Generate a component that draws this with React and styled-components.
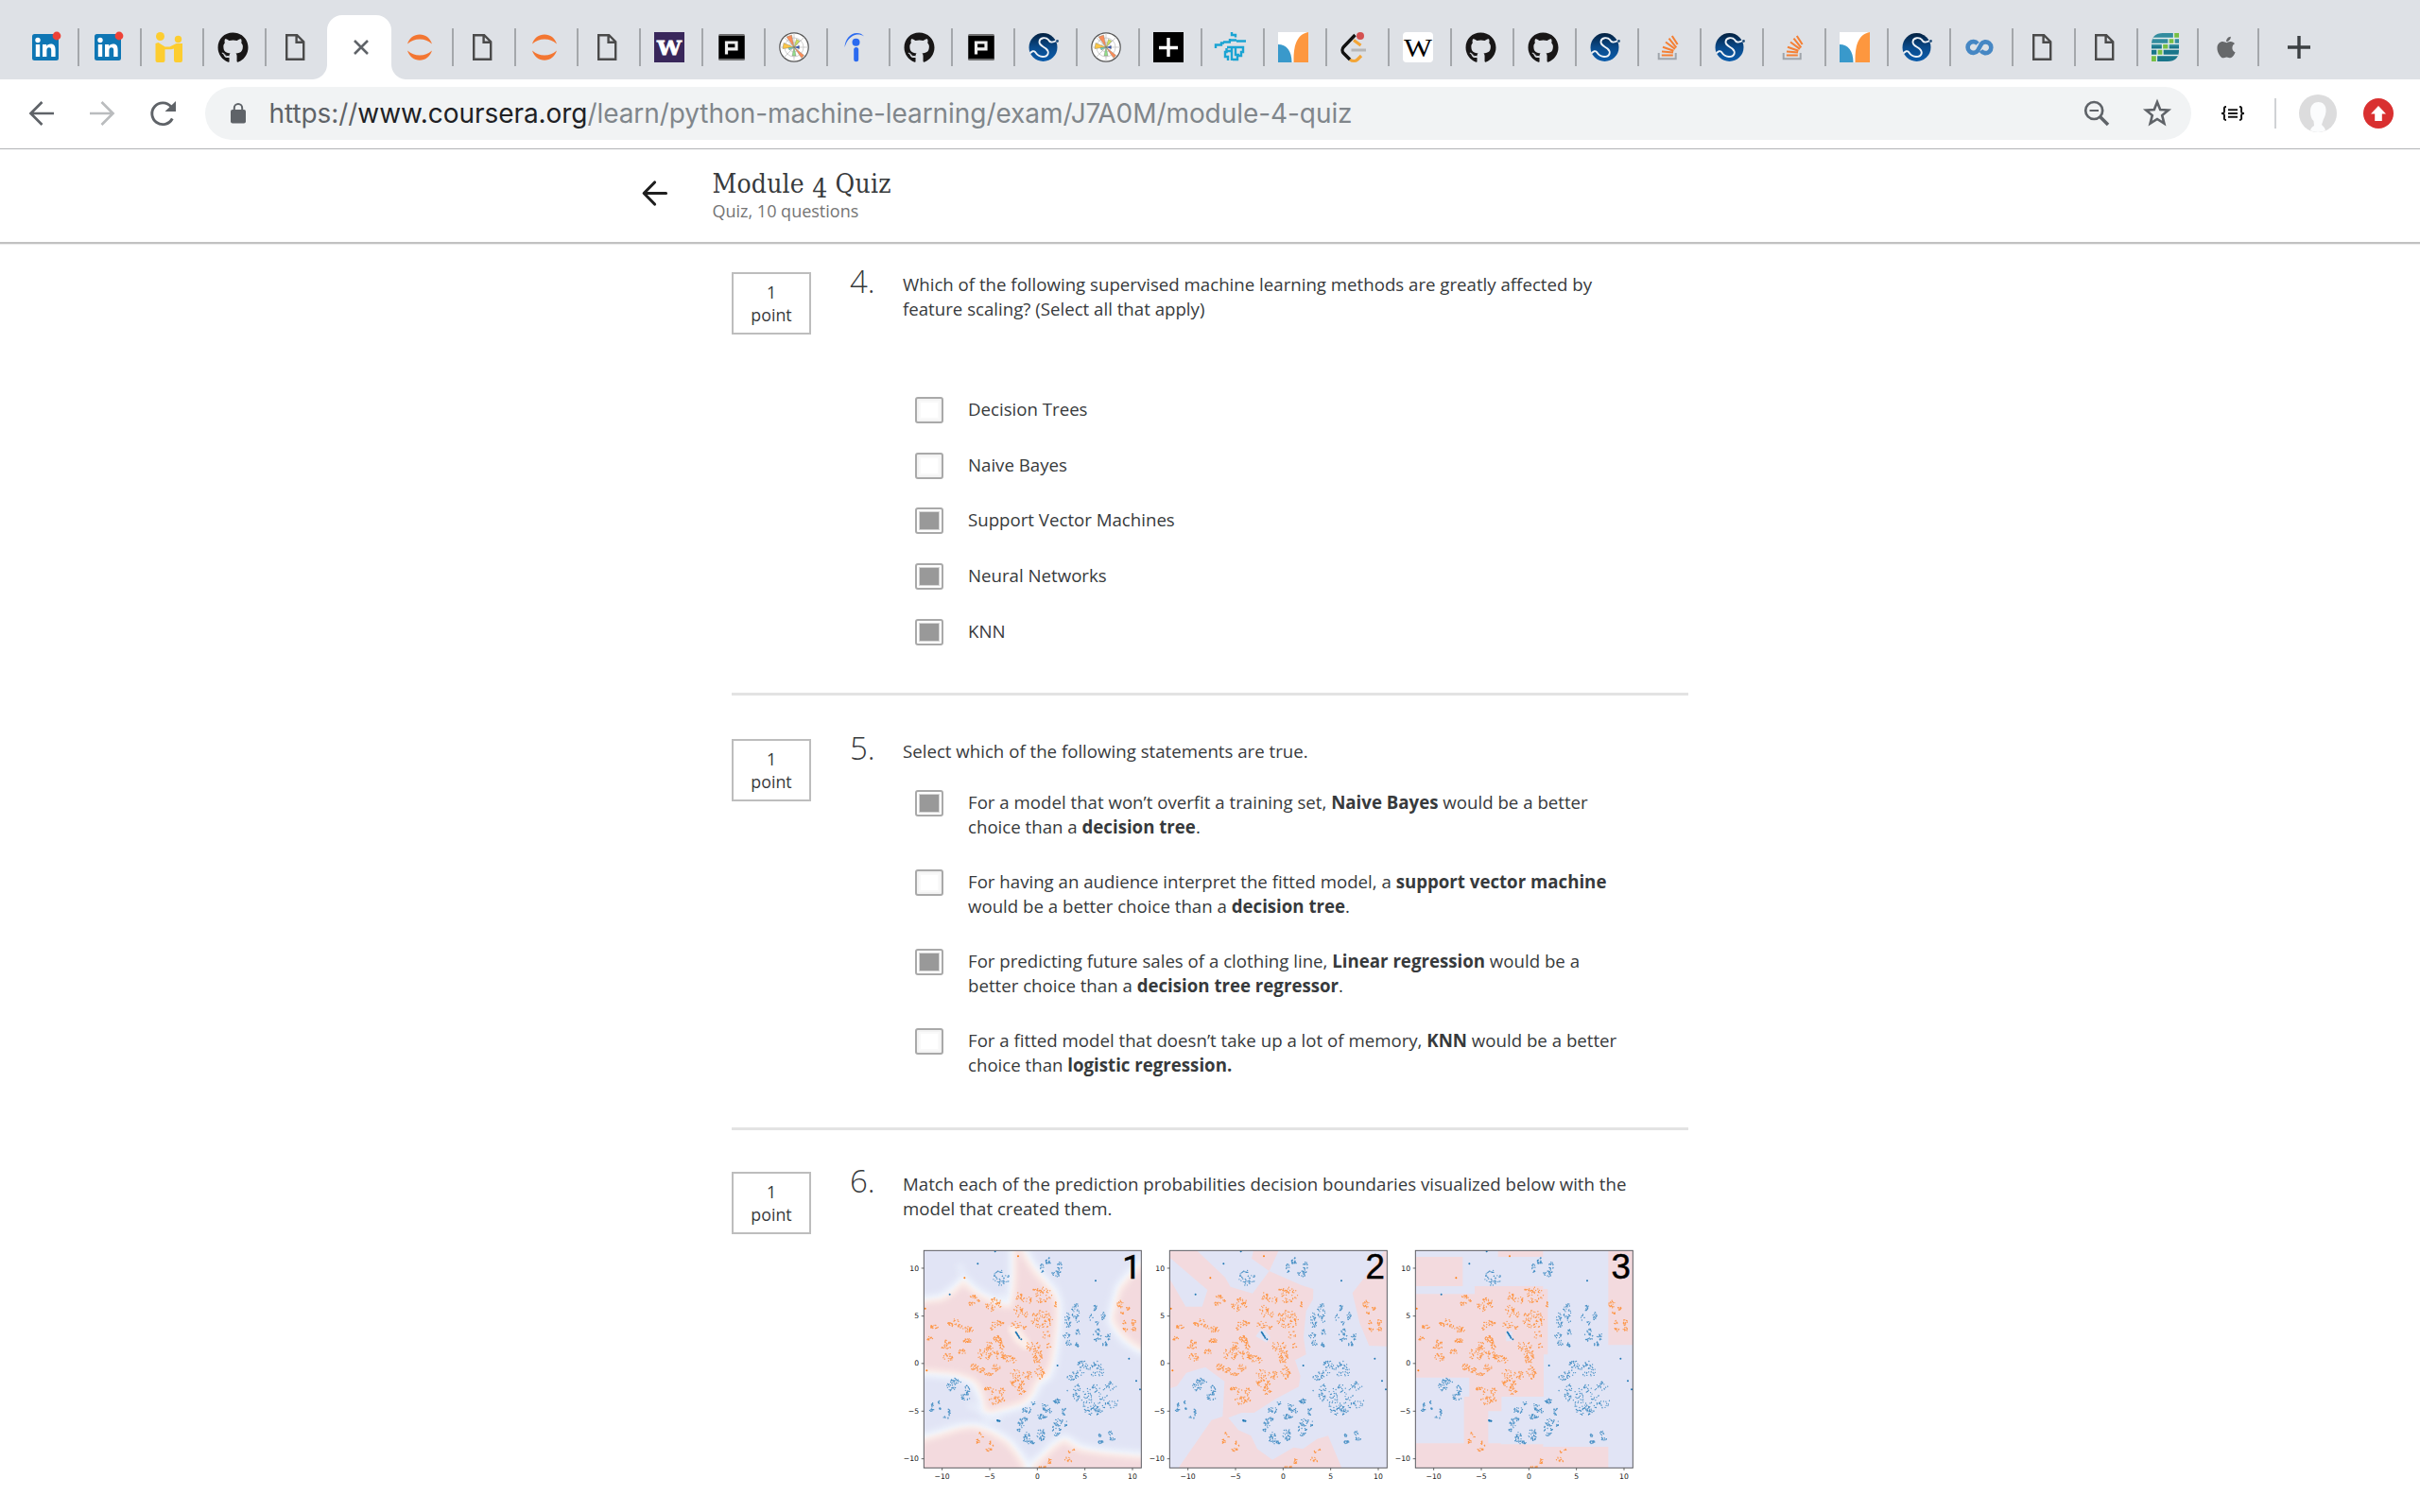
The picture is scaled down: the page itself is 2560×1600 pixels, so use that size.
import React from "react";
import styled, { createGlobalStyle } from "styled-components";
import { FaGithub, FaApple } from "react-icons/fa";

const GlobalStyle = createGlobalStyle`
  html, body { margin: 0; padding: 0; background: #fff; }
  *, *::before, *::after { box-sizing: border-box; }
  body { font-family: "Open Sans", "Noto Sans", sans-serif; color: #373a3c; }
`;

const Page = styled.div`
  width: 2560px;
  height: 1600px;
  overflow: hidden;
  background: #fff;
  svg { display: block; flex: none; overflow: visible; }
`;

/* ---------- browser chrome ---------- */

const TabStrip = styled.div`
  display: flex;
  height: 84px;
  padding: 16px 0 0 18px;
  background: #dee1e6;
`;

const Tab = styled.div`
  display: flex;
  align-items: center;
  justify-content: space-between;
  width: ${(p) => (p.$narrow ? 64 : 66)}px;
  height: 68px;
  padding-left: ${(p) => (p.$narrow ? 13 : 14)}px;
  &::after {
    content: "";
    width: 2px;
    height: 40px;
    background: ${(p) => (p.$noLine ? "transparent" : "#a4a7ab")};
  }
`;

const ActiveTab = styled.div`
  position: relative;
  display: flex;
  align-items: center;
  justify-content: center;
  width: 68px;
  margin: 0 0 0 -2px;
  padding-left: 3px;
  height: 68px;
  background: #fff;
  border-radius: 16px 16px 0 0;
  &::before, &::after {
    content: "";
    position: absolute;
    bottom: 0;
    width: 16px;
    height: 16px;
  }
  &::before { left: -16px; background: radial-gradient(circle at 0 0, transparent 15.5px, #fff 16.5px); }
  &::after { right: -16px; background: radial-gradient(circle at 100% 0, transparent 15.5px, #fff 16.5px); }
`;

const NewTab = styled.div`
  display: flex;
  align-items: center;
  padding-left: 30px;
`;

const Toolbar = styled.div`
  display: flex;
  align-items: center;
  height: 74px;
  padding: 0 28px 2px 28px;
  border-bottom: 1px solid #b2b4b6;
`;

const NavButtons = styled.div`
  display: flex;
  gap: 32px;
  width: 189px;
`;

const Omnibox = styled.div`
  display: flex;
  align-items: center;
  width: 2101px;
  height: 56px;
  padding: 0 20px 0 27px;
  border-radius: 28px;
  background: #f1f3f4;
`;

const Url = styled.div`
  flex: 1;
  margin-left: 24.5px;
  font: 400 28px/56px Inter, Roboto, sans-serif;
  letter-spacing: ${-0.065}px;
  color: #80868b;
  white-space: nowrap;
`;
const Scheme = styled.span`color: #5f6368;`;
const Host = styled.span`color: #202124;`;

const OmniActions = styled.div`
  display: flex;
  gap: 32px;
`;

const Extensions = styled.div`
  display: flex;
  align-items: center;
  padding-left: 30px;
`;
const Braces = styled.div`
  width: 28px;
  display: flex;
  justify-content: center;
`;
const Rule = styled.div`
  width: 2px;
  height: 32px;
  margin: 0 24px 0 30px;
  background: #d0d2d5;
`;
const Badges = styled.div`
  display: flex;
  align-items: center;
  gap: 28px;
`;

/* ---------- quiz page ---------- */

const QuizHeader = styled.header`
  display: flex;
  height: 100px;
  padding: 0 0 0 678.5px;
  border-bottom: 2px solid #c1c1c1;
  box-shadow: 0 1px 1px #ececec;
`;
const BackArrow = styled.div`
  width: 75px;
  padding-top: 33px;
`;
const Titles = styled.div`padding-top: 19px;`;
const Title = styled.h1`
  margin: 0;
  font: 400 28px/36px "DejaVu Serif Condensed", "DejaVu Serif", serif;
  font-stretch: condensed;
  letter-spacing: ${0.2}px;
  white-space: nowrap;
`;
const OldStyle = styled.span`
  display: inline-block;
  transform: translateY(5px);
`;
const Subtitle = styled.div`
  margin-top: -2px;
  font-size: 18px;
  line-height: 24px;
  color: #757575;
`;

const Content = styled.main`
  width: 1012px;
  margin-left: 774px;
`;

const Question = styled.section`
  display: grid;
  grid-template-columns: 84px 97px 1fr;
  align-items: start;
  height: ${(p) => p.$height}px;
  padding-top: ${(p) => p.$top}px;
  border-bottom: 3px solid #e3e3e3;
`;
const Points = styled.div`
  height: 66px;
  padding-top: 7px;
  border: 2px solid #bdbdbd;
  font-size: 17.8px;
  line-height: 24px;
  text-align: center;
`;
const Number = styled.div`
  margin-top: -12px;
  padding-left: 41px;
  font-size: 33px;
  font-weight: 300;
  line-height: 44px;
`;
const Body = styled.div`
  font-size: 18.67px;
  line-height: 26px;
  white-space: nowrap;
`;
const Options = styled.div`
  display: flex;
  flex-direction: column;
  gap: ${(p) => p.$gap}px;
  margin-top: ${(p) => p.$top}px;
  padding-left: 13px;
`;
const Option = styled.label`
  display: flex;
  align-items: flex-start;
  gap: 26px;
`;
const Check = styled.span`
  flex: none;
  width: 30px;
  height: 28px;
  margin-bottom: -2px;
  padding: 2px;
  border: 2px solid #a9a9a9;
  border-radius: 3px;
  background: ${(p) => (p.$on ? "#fff" : "#f3f3f3")};
  &::before {
    content: "";
    display: block;
    height: 100%;
    border: ${(p) => (p.$on ? "1px solid #d5d5d5" : "2px solid #f9f9f9")};
    background: ${(p) => (p.$on ? "#999" : "#fff")};
  }
`;
const Charts = styled.div`
  display: flex;
  gap: 5.2px;
  margin-top: 28px;
`;

/* ---------- favicons ---------- */

const Fav = ({ children, box = 32, size = 32 }) => (
  <svg width={size} height={size} viewBox={`0 0 ${box} ${box}`}>{children}</svg>
);

const LinkedIn = () => (
  <Fav>
    <rect x="2" y="2" width="28" height="28" rx="2.5" fill="#0e76b4" />
    <circle cx="8" cy="8.5" r="2.7" fill="#fff" />
    <path d="M5.8 13h4.4v13H5.8zM13 13h4.2v1.9c.8-1.4 2.3-2.3 4.4-2.3 4 0 5 2.6 5 6.2V26h-4.4v-6.5c0-1.800-.2-3.300-2.300-3.300-2 0-2.500 1.500-2.500 3.300V26H13z" fill="#fff" />
    <circle cx="28" cy="4" r="4.4" fill="#ee4237" />
  </Fav>
);
const People = () => (
  <Fav>
    <g fill="#fdcd30">
      <circle cx="5.500" cy="4.500" r="4.500" />
      <circle cx="24.500" cy="7.500" r="3.700" />
      <path d="M.5 12l3-1 7 4.500h5l7-3.500H29V30a2 2 0 0 1-2 2h-5a2 2 0 0 1-2-2V17.500l-3 .8h-6.500V30a2 2 0 0 1-2 2H2.500a2 2 0 0 1-2-2z" />
    </g>
  </Fav>
);
const GitHub = () => <FaGithub size={33} color="#181616" />;
const Doc = () => (
  <Fav>
    <path d="M7.200 3.200h11l7 7v18.600h-18zM17.600 3.500v7.300h7.300" fill="none" stroke="#4a4a4a" strokeWidth="2.400" />
  </Fav>
);
const Jupyter = () => (
  <Fav>
    <path d="M3 12.500C5 6 10 2.400 16 2.400S27 6 29 12.500C25 9 21 7.600 16 7.600S7 9 3 12.500zM3 19.500C5 26 10 29.800 16 29.800S27 26 29 19.500C25 23 21 24.400 16 24.400S7 23 3 19.500z" fill="#f37632" />
  </Fav>
);
const UW = () => (
  <Fav>
    <rect width="32" height="32" fill="#39275b" />
    <text x="16" y="23.500" textAnchor="middle" fontFamily="DejaVu Serif" fontWeight="700" fontSize="21" textLength="26" lengthAdjust="spacingAndGlyphs" fill="#fff" stroke="#fff" strokeWidth=".8">W</text>
  </Fav>
);
const PBox = () => (
  <Fav>
    <rect x="2" y="2" width="28" height="28" rx="1.500" fill="#6d6d6e" />
    <rect x="2.500" y="4" width="27" height="24" fill="#000" />
    <path d="M10.500 23.500V11h10.500v6.800H11.500" fill="none" stroke="#eee" strokeWidth="3.200" />
  </Fav>
);
const Matplotlib = () => (
  <Fav>
    <circle cx="16" cy="16" r="15.200" fill="#fff" stroke="#555" strokeWidth="1.200" />
    <g stroke="#bbb" strokeWidth=".7" fill="none">
      <circle cx="16" cy="16" r="10" /><circle cx="16" cy="16" r="5" />
      <path d="M16 1v30M1 16h30M5.500 5.500l21 21M26.500 5.500l-21 21" />
    </g>
    <g stroke="#776" strokeWidth=".4">
      <path d="M16 16L8 5l5.500-2z" fill="#fb8d59" />
      <path d="M16 16L4 17.500 5 11.500z" fill="#fcc646" />
      <path d="M16 16l2.500-8.500 3.500 2z" fill="#cde35c" />
      <path d="M16 16l10.500 8.500-2.500 3z" fill="#fb8d59" />
      <path d="M16 16l2 9h-4z" fill="#92e08c" />
      <path d="M16 16l5.500-1.600v3.200z" fill="#2b4fc0" />
      <path d="M16 16l-5 3-1-2.500z" fill="#5fd5c6" />
    </g>
  </Fav>
);
const Indeed = () => (
  <Fav>
    <path d="M3.500 16C4 8 9 1 16.500 1c3 0 5.500 1 7.700 3.500C21.500 2.800 19 2.300 16.500 2.500 11 3 6 8 3.500 16z" fill="#2a6af0" />
    <circle cx="15.500" cy="10.700" r="4" fill="#2a6af0" />
    <rect x="13.200" y="16" width="5" height="15.200" rx="2.500" fill="#2a6af0" />
  </Fav>
);
const SciPy = () => (
  <Fav>
    <defs>
      <linearGradient id="scipy" x1="0" y1="0" x2="0" y2="1">
        <stop offset="0" stopColor="#03203f" /><stop offset=".5" stopColor="#0a4a8a" /><stop offset="1" stopColor="#0b5cab" />
      </linearGradient>
    </defs>
    <circle cx="15.500" cy="16" r="15" fill="url(#scipy)" />
    <path d="M1.500 22.500c2-2.500 4-3 5.500-1.500 2 3 4.500 5 8 5 6 0 7.500-5 3.500-8.500-3-2.400-7.500-3.500-7-7.500.5-4.500 7-5 9.500-2 1.500 3 4 3.500 8.500 1" fill="none" stroke="#eef2f7" strokeWidth="1.900" />
    <circle cx="30.500" cy="9.500" r="1.400" fill="#23507c" />
  </Fav>
);
const PlusBox = () => (
  <Fav><rect width="32" height="32" /><path d="M16 6v20M6 16.500h20" stroke="#fff" strokeWidth="3.400" /></Fav>
);
const Sketch = () => (
  <Fav>
    <g fill="none" stroke="#1ba4d3" strokeWidth="2.400">
      <path d="M17 0v3h4v2.500M16 8.500h6M15 7v3M8 10.500h8M22 9.500h10M0 17v-3.500h6v-2h3" />
      <path d="M11.500 17v4h-1.500v5h3v4M17 16v14M17 20h-5M21 17v7h4M12 16h17v5h-2v4h-4v4h-5" />
    </g>
  </Fav>
);
const Curves = () => (
  <Fav>
    <rect width="32" height="32" fill="#fff" />
    <path d="M0 13c9 0 14.500 7 14.500 19H0z" fill="#3999cb" />
    <path d="M32 0C21 2 16 12 16.500 32H32z" fill="#fd973f" />
  </Fav>
);
const Leet = () => (
  <Fav>
    <g fill="none" strokeWidth="3.400">
      <path d="M14 8.500l7.500 5.500M22 25l-4 4c-2 2-5.500 2-8 0" stroke="#f3a536" strokeWidth="3.200" />
      <path d="M15.500 3L3.500 15.500c-2 2-2 5 0 7l6.500 6.500" stroke="#111" />
      <path d="M11.500 19H27" stroke="#b6b6b6" strokeWidth="3" />
    </g>
    <circle cx="21" cy="4" r="4" fill="#d45151" />
  </Fav>
);
const Wikipedia = () => (
  <Fav>
    <rect width="32" height="32" rx="4" fill="#fff" />
    <text x="16" y="26" textAnchor="middle" fontFamily="Liberation Serif" fontSize="28" textLength="30" lengthAdjust="spacingAndGlyphs">W</text>
  </Fav>
);
const StackOverflow = () => (
  <Fav>
    <path d="M6.700 22v6.300h18V22" fill="none" stroke="#a0a5ab" strokeWidth="2" />
    <path d="M9.800 24.500h12M10 20.500l12 1M11 15.700l11.500 4M14 10.500l10 7.300M17.500 6.700l7.800 9.600M20.800 4l5.800 9" fill="none" stroke="#f48035" strokeWidth="2.100" />
  </Fav>
);
const Infinity8 = () => (
  <Fav>
    <g fill="none" stroke="#4687c4" strokeWidth="4.600">
      <path d="M14 12.200A5.900 5.900 0 1 0 14 19.800L18 12.500" />
      <path d="M17.500 13A5.900 5.900 0 1 1 17.500 19.500" />
    </g>
  </Fav>
);
const Globe = () => (
  <Fav>
    <clipPath id="globe"><path d="M13 1h17v18c0 8-4 12-12 12H1V13C1 5 5 1 13 1z" /></clipPath>
    <g clipPath="url(#globe)">
      <rect width="32" height="15" fill="#338c9e" /><rect y="15" width="32" height="17" fill="#19758a" />
      <g fill="#77bf44">
        <rect x="24.500" width="8" height="6" /><rect x="19" y="6" width="6" height="6" />
        <rect x="12.500" y="12" width="6" height="6" /><rect x="7" y="18" width="6" height="6" /><rect y="24" width="6" height="8" />
      </g>
      <path d="M0 6.500h32M0 12.300h32M0 18.200h32M0 24.500h32M24.500 0v6M19 6v6M25 6v6M12.500 12v6M19 12v6M7 18v6M13 18v6M6.500 24v8" stroke="#e6eeee" strokeWidth="1.300" />
    </g>
  </Fav>
);
const Apple = () => <FaApple size={32} color="#66686a" style={{ padding: 3 }} />;
const Close = () => (
  <svg width="16" height="16" viewBox="0 0 16 16"><path d="M1 1l14 14M15 1L1 15" stroke="#5f6368" strokeWidth="2.600" /></svg>
);

const TABS = [
  LinkedIn, LinkedIn, People, GitHub, Doc, null, Jupyter, Doc, Jupyter, Doc, UW, PBox,
  Matplotlib, Indeed, GitHub, PBox, SciPy, Matplotlib, PlusBox, Sketch, Curves, Leet,
  Wikipedia, GitHub, GitHub, SciPy, StackOverflow, SciPy, StackOverflow, Curves, SciPy,
  Infinity8, Doc, Doc, Globe, Apple,
];

/* ---------- scatter plots ---------- */

// Each cluster: centre x, centre y, radius x, radius y, number of samples.
const BLUE = [
  [358,157,24,22,48],[487,126,6,12,18],[507,103,8,11,22],[543,120,7,12,16],[533,143,14,9,24],
  [568,292,10,24,32],[594,262,12,24,32],[600,288,6,12,10],[655,252,8,8,14],[643,283,5,12,7],
  [661,300,5,6,8],[681,278,6,12,17],[565,340,10,8,14],[601,330,6,10,14],[571,363,9,8,14],
  [599,370,6,7,14],[665,325,8,6,9],[660,345,14,12,20],[697,343,8,10,14],[687,368,7,8,15],
  [613,430,14,12,22],[635,440,12,8,12],[661,430,12,8,14],[672,453,12,14,16],[650,462,8,6,7],
  [605,460,20,10,18],[580,475,16,8,17],[598,505,12,12,15],[595,535,10,14,22],
  [655,540,40,42,85],[705,500,16,14,22],[710,555,20,14,20],[648,580,28,12,32],
  [213,485,15,10,24],[200,502,14,14,22],[250,508,8,15,18],[243,535,14,10,20],[160,552,3,5,8],
  [139,560,4,7,8],[138,577,7,4,12],[165,571,4,3,5],[191,583,5,12,14],[182,600,8,4,7],
  [349,610,6,3,10],[459,555,7,5,7],[438,577,14,9,22],[428,605,12,6,16],[420,622,10,10,16],
  [413,638,6,6,10],[495,563,10,12,15],[507,578,10,8,16],[487,597,14,8,26],[534,548,10,7,28],
  [557,580,6,12,18],[540,615,15,12,20],[533,640,14,18,26],[562,620,6,8,7],[440,655,8,8,14],
  [435,670,13,8,20],[452,680,10,5,18],[484,655,12,20,38],[670,657,4,6,8],[672,678,8,5,18],
  [705,650,8,8,10],[709,668,9,5,11],[567,515,1,1,2],
];
const ORANGE = [
  [270,216,10,6,14],[263,239,11,5,14],[286,230,5,5,6],[339,230,16,10,20],[322,248,15,14,22],
  [350,243,8,8,12],[415,216,12,12,20],[440,228,18,10,17],[487,196,28,9,22],[490,215,26,20,38],
  [529,240,4,10,12],[412,262,14,17,26],[430,270,10,12,11],[487,288,32,26,78],[405,306,16,10,17],
  [432,312,5,7,7],[343,303,14,12,26],[322,318,8,4,6],[363,298,5,4,4],[145,311,13,6,20],
  [131,350,8,7,15],[205,298,17,12,28],[226,310,8,6,8],[246,320,13,10,18],[262,322,6,8,8],
  [250,357,12,7,24],[233,392,10,9,18],[186,362,10,8,16],[182,376,14,6,14],[190,408,16,11,24],
  [344,350,10,9,28],[359,368,8,17,26],[318,370,10,12,16],[303,400,18,20,34],[325,388,12,14,15],
  [352,400,17,15,24],[375,412,18,10,22],[396,420,9,10,10],[272,440,12,10,24],[292,450,12,11,20],
  [318,462,14,6,14],[342,442,12,12,22],[472,402,15,25,54],[460,370,20,15,15],[508,370,7,12,9],
  [500,340,12,14,10],[446,382,10,6,7],[480,457,14,20,34],[402,462,14,14,20],[440,465,14,13,23],
  [410,490,22,14,38],[420,515,14,11,20],[313,508,11,5,18],[347,518,20,16,24],[336,545,18,13,24],
  [360,545,8,8,9],[735,240,9,12,18],[759,253,7,6,11],[743,267,6,4,8],[748,297,9,6,7],
  [777,298,7,9,15],[777,320,7,6,11],[750,321,9,5,10],[290,652,4,4,7],[299,663,3,2,3],
  [283,675,6,7,12],[322,680,5,5,7],[333,690,3,3,3],[318,702,9,5,13],[511,738,5,9,16],
  [481,757,6,3,8],[496,757,4,3,6],[573,709,3,3,6],[587,703,4,3,6],[568,733,8,7,12],[582,738,3,3,3],
];
const BLUE_SINGLE = [
  [338,73],[283,112],[194,209],[657,166],[536,435],[763,413],[786,484],[798,511],
  [404,329],[406,332],[408,335],[410,339],[413,343],[415,347],[421,352],[346,609],[352,611],
];
const ORANGE_SINGLE = [[411,88],[241,157],[116,254],[121,451]];

function scatter(clusters, seed) {
  let s = seed;
  const rnd = () => {
    s = (s + 0x6d2b79f5) | 0;
    let t = Math.imul(s ^ (s >>> 15), 1 | s);
    t = (t + Math.imul(t ^ (t >>> 7), 61 | t)) ^ t;
    return ((t ^ (t >>> 14)) >>> 0) / 4294967296;
  };
  let d = "";
  clusters.forEach(([cx, cy, rx, ry, n]) => {
    for (let i = 0; i < n; i++) {
      const a = rnd() * Math.PI * 2;
      const r = Math.sqrt(0.05 + rnd() * 0.95) * 1.1;
      const x = (cx - 112 + Math.cos(a) * r * rx).toFixed(1);
      const y = (cy - 70 + Math.sin(a) * r * ry).toFixed(1);
      d += `M${x} ${y}h.01`;
    }
  });
  return d;
}
const singles = (list) => list.map(([x, y]) => `M${x - 112} ${y - 70}h.01`).join("");

const BLUE_PATH = scatter(BLUE, 7);
const ORANGE_PATH = scatter(ORANGE, 23);
const BLUE_DOTS = singles(BLUE_SINGLE);
const ORANGE_DOTS = singles(ORANGE_SINGLE);

const PINK = "#f3dade";
const PALE_BLUE = "#e1e4f5";

const SOFT =
  "M60 235L160 222Q195 210 238 160Q270 200 320 222Q360 240 383 243Q394 200 396 140V30H412L432 75L460 122L512 184Q540 210 540 260Q536 340 524 410Q512 462 500 474Q482 478 470 500Q455 545 420 560L340 582Q308 590 302 575Q300 530 272 492Q240 464 160 460L60 450Z" +
  "M850 50L802 110Q760 145 730 190Q712 250 706 290Q730 350 802 388H850Z" +
  "M60 675L112 665L180 645Q240 622 290 630Q340 645 385 680Q412 712 432 745L442 810H60Z" +
  "M445 810L455 752L500 710Q540 668 565 668Q590 690 620 700Q680 714 802 722H850V810Z";

const SoftRegions = () => (
  <g transform="translate(-112 -70)" strokeLinejoin="round">
    <path d={SOFT} fill="#f1f7fe" stroke="#f1f7fe" strokeWidth="26" filter="url(#b10)" />
    <path d="M222 110L240 150M383 243L350 205M300 610L360 600M300 575L250 560" fill="none" stroke="#f1f7fe" strokeWidth="22" opacity=".45" filter="url(#b10)" />
    <path d={SOFT} fill="#fdf1eb" filter="url(#b5)" />
    <path d={SOFT} fill={PINK} filter="url(#inner)" />
    <path d="M388 318L410 322L440 364L434 376L405 352Z" fill="#fef6f0" stroke="#fdf0ea" strokeWidth="18" opacity=".9" filter="url(#b5)" />
  </g>
);
const SharpRegions = () => (
  <g transform="translate(-82 -70)">
    <path fill={PINK} d="M82 70H168L258 155L275 185L345 206L398 135L342 95L348 70H428L398 135Q450 158 500 180L538 192L537 225L515 262L507 345L515 400L480 418L497 468L492 502L420 540L350 585L310 585L268 601L300 640L340 658L360 700L408 734L475 695L505 700L550 668L585 658L628 760H110L215 608L250 597L256 485L195 440L135 458L105 500L82 508Z" />
    <path fill={PINK} d="M772 70H764L735 110L662 205L685 300L715 372L772 374Z" />
    <path fill={PALE_BLUE} d="M82 92L202 195L185 248H133L82 160ZM355 342L370 322L384 324L402 345L390 362Z" />
  </g>
);
const BoxRegions = () => (
  <g transform="translate(-85 -70)">
    <path fill={PINK} d="M85 90H235V183H85ZM347 70H490V90H347ZM697 70H775V370H697ZM85 208H273V183H490V192H505V400H492V534H358V580H316V682H356V685H490V693H697V760H85V682H239V534H256V473H85Z" />
    <path fill={PALE_BLUE} d="M373 327H392V358H373Z" />
  </g>
);

const X_TICKS = [["−10", 58], ["−5", 209], ["0", 360], ["5", 511], ["10", 662]];
const Y_TICKS = [["10", 56], ["5", 208], ["0", 358.5], ["−5", 510], ["−10", 661]];

const Plot = ({ label, children }) => (
  <svg width="255" height="246.67" viewBox="-67 -10 765 740">
    <defs>
      <clipPath id={`clip${label}`}><rect width="690" height="690" /></clipPath>
      <filter id="b10" x="-20%" y="-20%" width="140%" height="140%"><feGaussianBlur stdDeviation="11" /></filter>
      <filter id="b5" x="-20%" y="-20%" width="140%" height="140%"><feGaussianBlur stdDeviation="7" /></filter>
      <filter id="inner" x="-20%" y="-20%" width="140%" height="140%">
        <feMorphology operator="erode" radius="8" />
        <feGaussianBlur stdDeviation="10" />
      </filter>
    </defs>
    <g clipPath={`url(#clip${label})`}>
      <rect width="690" height="690" fill={PALE_BLUE} />
      {children}
      <g fill="none" strokeLinecap="round">
        <path d={ORANGE_PATH} stroke="#ff8a2a" strokeWidth="4" opacity=".85" />
        <path d={BLUE_PATH} stroke="#2f83bd" strokeWidth="4" opacity=".85" />
        <path d={ORANGE_DOTS} stroke="#ff7f0e" strokeWidth="6" />
        <path d={BLUE_DOTS} stroke="#1f77b4" strokeWidth="6" />
      </g>
    </g>
    <rect width="690" height="690" fill="none" stroke="#5c5c62" strokeWidth="3" />
    <g stroke="#444" strokeWidth="2.400">
      {X_TICKS.map(([t, x]) => <path key={t} d={`M${x} 690v8`} />)}
      {Y_TICKS.map(([t, y]) => <path key={t} d={`M0 ${y}h-8`} />)}
    </g>
    <g fontFamily="DejaVu Sans" fontSize="23" fill="#222">
      {X_TICKS.map(([t, x]) => <text key={t} x={x} y="724" textAnchor="middle">{t}</text>)}
      {Y_TICKS.map(([t, y]) => <text key={t} x="-16" y={y + 8} textAnchor="end">{t}</text>)}
    </g>
    <text
      x={label === "1" ? 689 : 683} y="89.500" textAnchor="end" fill="#000" stroke="#000" strokeWidth="1.500"
      fontFamily={label === "1" ? "Roboto" : "Liberation Sans"}
      fontSize={label === "1" ? 106 : 110}
    >{label}</text>
  </svg>
);

/* ---------- questions ---------- */

const METHODS = [
  ["Decision Trees", false],
  ["Naive Bayes", false],
  ["Support Vector Machines", true],
  ["Neural Networks", true],
  ["KNN", true],
];
const STATEMENTS = [
  [true, <>For a model that won’t overfit a training set, <b>Naive Bayes</b> would be a better<br />choice than a <b>decision tree</b>.</>],
  [false, <>For having an audience interpret the fitted model, a <b>support vector machine</b><br />would be a better choice than a <b>decision tree</b>.</>],
  [true, <>For predicting future sales of a clothing line, <b>Linear regression</b> would be a<br />better choice than a <b>decision tree regressor</b>.</>],
  [false, <>For a fitted model that doesn’t take up a lot of memory, <b>KNN</b> would be a better<br />choice than <b>logistic regression.</b></>],
];

const PointBadge = () => <Points>1<br />point</Points>;

export default function App() {
  return (
    <Page>
      <GlobalStyle />
      <TabStrip>
        {TABS.map((Icon, i) =>
          Icon ? (
            <Tab key={i} $narrow={i > 33} $noLine={i === 4}><Icon /></Tab>
          ) : (
            <ActiveTab key={i}><Close /></ActiveTab>
          )
        )}
        <NewTab>
          <svg width="24" height="24" viewBox="0 0 24 24"><path d="M12 0v24M0 12h24" stroke="#3c4043" strokeWidth="3.400" /></svg>
        </NewTab>
      </TabStrip>

      <Toolbar>
        <NavButtons>
          <svg width="32" height="32" viewBox="0 0 32 32"><path d="M29 16H5M16.500 4L4.500 16l12 12" fill="none" stroke="#5f6368" strokeWidth="2.700" /></svg>
          <svg width="32" height="32" viewBox="0 0 32 32"><path d="M3 16h24M15.500 4l12 12-12 12" fill="none" stroke="#babcbe" strokeWidth="2.700" /></svg>
          <svg width="32" height="32" viewBox="0 0 32 32"><path d="M26.300 21.500A11.400 11.400 0 1 1 25 9" fill="none" stroke="#5f6368" strokeWidth="2.900" /><path d="M30 3v11H18.500z" fill="#5f6368" /></svg>
        </NavButtons>
        <Omnibox>
          <svg width="16" height="22" viewBox="0 0 16 22"><rect y="7" width="16" height="14.500" rx="2" fill="#5f6368" /><path d="M3.800 8V5.200a4.200 4.200 0 0 1 8.400 0V8" fill="none" stroke="#5f6368" strokeWidth="2" /></svg>
          <Url><Scheme>https://</Scheme><Host>www.coursera.org</Host>/learn/python-machine-learning/exam/J7A0M/module-4-quiz</Url>
          <OmniActions>
            <svg width="32" height="32" viewBox="0 0 32 32"><circle cx="13.200" cy="13" r="9" fill="none" stroke="#5f6368" strokeWidth="2.700" /><path d="M8.500 13h9.500" stroke="#5f6368" strokeWidth="2" /><path d="M19.500 19.500l8.500 8.500" stroke="#5f6368" strokeWidth="3.600" /></svg>
            <svg width="32" height="32" viewBox="0 0 32 32"><path d="M16 4l3.200 8 8.600.6-6.600 5.500 2.200 8.500L16 22l-7.400 4.600 2.200-8.500-6.600-5.500 8.600-.6z" fill="none" stroke="#5f6368" strokeWidth="2.600" /></svg>
          </OmniActions>
        </Omnibox>
        <Extensions>
          <Braces>
            <svg width="26" height="16" viewBox="0 0 26 16"><path d="M6 1C3 1 4 3 4 5.500S3 8 1 8c2 0 3 0 3 2.500S3 15 6 15M20 1c3 0 2 2 2 4.500S23 8 25 8c-2 0-3 0-3 2.500s1 4.500-2 4.500M8 4.200h10M8 8h10M8 11.800h10" fill="none" stroke="#151515" strokeWidth="2" /></svg>
          </Braces>
          <Rule />
          <Badges>
            <svg width="40" height="40" viewBox="0 0 40 40">
              <circle cx="20" cy="20" r="20" fill="#dcdcdd" />
              <path d="M12 18c0-7 4-10 8.500-10s8.500 3 8 10c-.3 5-3 8-3.500 11l-1 3c2 2 4 4 4 6.300a20 20 0 0 1-16 0c0-2 2-4.300 4-5.300l-.5-5C13 26 12 22 12 18z" fill="#fbfcfd" />
            </svg>
            <svg width="32" height="32" viewBox="0 0 32 32"><circle cx="16" cy="16" r="16" fill="#d93030" /><path d="M16 8l8 8.500h-4.200V24h-7.600v-7.500H8z" fill="#fff" /></svg>
          </Badges>
        </Extensions>
      </Toolbar>

      <QuizHeader>
        <BackArrow>
          <svg width="27" height="27" viewBox="0 0 27 27"><path d="M25.500 13.500H3M13.500 2L2.200 13.500 13.500 25" fill="none" stroke="#1f1f1f" strokeWidth="3.200" strokeLinecap="round" strokeLinejoin="round" /></svg>
        </BackArrow>
        <Titles>
          <Title>Module <OldStyle>4</OldStyle> Quiz</Title>
          <Subtitle>Quiz, 10 questions</Subtitle>
        </Titles>
      </QuizHeader>

      <Content>
        <Question $height={478} $top={30}>
          <PointBadge />
          <Number>4.</Number>
          <Body>
            Which of the following supervised machine learning methods are greatly affected by<br />
            feature scaling? (Select all that apply)
            <Options $top={80} $gap={32.7}>
              {METHODS.map(([name, on]) => (
                <Option key={name}><Check $on={on} /><span>{name}</span></Option>
              ))}
            </Options>
          </Body>
        </Question>

        <Question $height={460} $top={46}>
          <PointBadge />
          <Number>5.</Number>
          <Body>
            Select which of the following statements are true.
            <Options $top={28} $gap={32}>
              {STATEMENTS.map(([on, text], i) => (
                <Option key={i}><Check $on={on} /><span>{text}</span></Option>
              ))}
            </Options>
          </Body>
        </Question>

        <Question $height={500} $top={44}>
          <PointBadge />
          <Number>6.</Number>
          <Body>
            Match each of the prediction probabilities decision boundaries visualized below with the<br />
            model that created them.
            <Charts>
              <Plot label="1"><SoftRegions /></Plot>
              <Plot label="2"><SharpRegions /></Plot>
              <Plot label="3"><BoxRegions /></Plot>
            </Charts>
          </Body>
        </Question>
      </Content>
    </Page>
  );
}
